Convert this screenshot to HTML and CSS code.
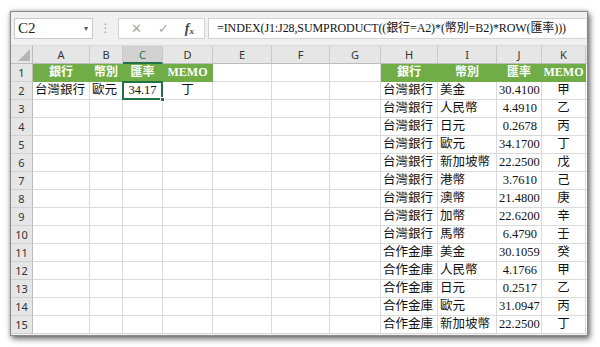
FILE: index.html
```html
<!DOCTYPE html>
<html>
<head>
<meta charset="utf-8">
<link rel="stylesheet" href="styles.css">
</head>
<body>
<div class="window">
  <div class="toolbar">
    <div class="namebox"><span>C2</span><span class="caret">▾</span></div>
    <div class="dots">⋮</div>
    <div class="fxbox"><span class="x">✕</span><span class="check">✓</span><span class="fx">f<sub>x</sub></span></div>
    <div class="formula">=INDEX(J1:J28,SUMPRODUCT((銀行=A2)*(幣別=B2)*ROW(匯率)))</div>
  </div>
  <div class="sheet">
    <div class="corner"></div>
    <div class="ch">A</div><div class="ch">B</div><div class="ch sel">C</div><div class="ch">D</div><div class="ch">E</div><div class="ch">F</div><div class="ch">G</div><div class="ch">H</div><div class="ch">I</div><div class="ch">J</div><div class="ch">K</div><div class="ch end"></div>

    <div class="rh">1</div>
    <div class="c g">銀行</div><div class="c g">幣別</div><div class="c g">匯率</div><div class="c g">MEMO</div><div class="c"></div><div class="c"></div><div class="c"></div>
    <div class="c g">銀行</div><div class="c g">幣別</div><div class="c g">匯率</div><div class="c g">MEMO</div><div class="c end"></div>

    <div class="rh">2</div>
    <div class="c">台灣銀行</div><div class="c">歐元</div><div class="c m active">34.17</div><div class="c m">丁</div><div class="c"></div><div class="c"></div><div class="c"></div>
    <div class="c">台灣銀行</div><div class="c">美金</div><div class="c r">30.4100</div><div class="c m">甲</div><div class="c end"></div>

    <div class="rh">3</div>
    <div class="c"></div><div class="c"></div><div class="c"></div><div class="c"></div><div class="c"></div><div class="c"></div><div class="c"></div>
    <div class="c">台灣銀行</div><div class="c">人民幣</div><div class="c r">4.4910</div><div class="c m">乙</div><div class="c end"></div>

    <div class="rh">4</div>
    <div class="c"></div><div class="c"></div><div class="c"></div><div class="c"></div><div class="c"></div><div class="c"></div><div class="c"></div>
    <div class="c">台灣銀行</div><div class="c">日元</div><div class="c r">0.2678</div><div class="c m">丙</div><div class="c end"></div>

    <div class="rh">5</div>
    <div class="c"></div><div class="c"></div><div class="c"></div><div class="c"></div><div class="c"></div><div class="c"></div><div class="c"></div>
    <div class="c">台灣銀行</div><div class="c">歐元</div><div class="c r">34.1700</div><div class="c m">丁</div><div class="c end"></div>

    <div class="rh">6</div>
    <div class="c"></div><div class="c"></div><div class="c"></div><div class="c"></div><div class="c"></div><div class="c"></div><div class="c"></div>
    <div class="c">台灣銀行</div><div class="c">新加坡幣</div><div class="c r">22.2500</div><div class="c m">戊</div><div class="c end"></div>

    <div class="rh">7</div>
    <div class="c"></div><div class="c"></div><div class="c"></div><div class="c"></div><div class="c"></div><div class="c"></div><div class="c"></div>
    <div class="c">台灣銀行</div><div class="c">港幣</div><div class="c r">3.7610</div><div class="c m">己</div><div class="c end"></div>

    <div class="rh">8</div>
    <div class="c"></div><div class="c"></div><div class="c"></div><div class="c"></div><div class="c"></div><div class="c"></div><div class="c"></div>
    <div class="c">台灣銀行</div><div class="c">澳幣</div><div class="c r">21.4800</div><div class="c m">庚</div><div class="c end"></div>

    <div class="rh">9</div>
    <div class="c"></div><div class="c"></div><div class="c"></div><div class="c"></div><div class="c"></div><div class="c"></div><div class="c"></div>
    <div class="c">台灣銀行</div><div class="c">加幣</div><div class="c r">22.6200</div><div class="c m">辛</div><div class="c end"></div>

    <div class="rh">10</div>
    <div class="c"></div><div class="c"></div><div class="c"></div><div class="c"></div><div class="c"></div><div class="c"></div><div class="c"></div>
    <div class="c">台灣銀行</div><div class="c">馬幣</div><div class="c r">6.4790</div><div class="c m">壬</div><div class="c end"></div>

    <div class="rh">11</div>
    <div class="c"></div><div class="c"></div><div class="c"></div><div class="c"></div><div class="c"></div><div class="c"></div><div class="c"></div>
    <div class="c">合作金庫</div><div class="c">美金</div><div class="c r">30.1059</div><div class="c m">癸</div><div class="c end"></div>

    <div class="rh">12</div>
    <div class="c"></div><div class="c"></div><div class="c"></div><div class="c"></div><div class="c"></div><div class="c"></div><div class="c"></div>
    <div class="c">合作金庫</div><div class="c">人民幣</div><div class="c r">4.1766</div><div class="c m">甲</div><div class="c end"></div>

    <div class="rh">13</div>
    <div class="c"></div><div class="c"></div><div class="c"></div><div class="c"></div><div class="c"></div><div class="c"></div><div class="c"></div>
    <div class="c">合作金庫</div><div class="c">日元</div><div class="c r">0.2517</div><div class="c m">乙</div><div class="c end"></div>

    <div class="rh">14</div>
    <div class="c"></div><div class="c"></div><div class="c"></div><div class="c"></div><div class="c"></div><div class="c"></div><div class="c"></div>
    <div class="c">合作金庫</div><div class="c">歐元</div><div class="c r">31.0947</div><div class="c m">丙</div><div class="c end"></div>

    <div class="rh">15</div>
    <div class="c"></div><div class="c"></div><div class="c"></div><div class="c"></div><div class="c"></div><div class="c"></div><div class="c"></div>
    <div class="c">合作金庫</div><div class="c">新加坡幣</div><div class="c r">22.2500</div><div class="c m">丁</div><div class="c end"></div>
  </div>
</div>
</body>
</html>
```

FILE: styles.css
```css
html, body {
  margin: 0;
  padding: 0;
  background: #ffffff;
}
body {
  width: 600px;
  height: 347px;
  overflow: hidden;
  padding: 11px 0 0 10px;
  box-sizing: border-box;
}
.window {
  width: 578px;
  height: 325px;
  border: 1px solid #8a8a8a;
  box-sizing: border-box;
  background: #f0f0f0;
  box-shadow: 2px 3px 6px rgba(0,0,0,0.55), 0 0 4px rgba(0,0,0,0.25);
  overflow: hidden;
}
.toolbar {
  height: 34px;
  display: flex;
  align-items: flex-start;
  padding-top: 6px;
  box-sizing: border-box;
  border-bottom: 1px solid #dadada;
}
.namebox {
  margin-left: 3px;
  width: 79px;
  height: 21px;
  background: #fff;
  border: 1px solid #c8c8c8;
  box-sizing: border-box;
  display: flex;
  align-items: center;
  justify-content: space-between;
  padding: 0 4px 0 3px;
  font-family: "Liberation Serif", serif;
  font-size: 15px;
  color: #222;
}
.caret {
  font-family: "DejaVu Sans", sans-serif;
  font-size: 8px;
  color: #555;
}
.dots {
  width: 25px;
  text-align: center;
  font-family: "DejaVu Sans", sans-serif;
  font-size: 12px;
  color: #a0a0a0;
  line-height: 21px;
}
.fxbox {
  width: 87px;
  height: 21px;
  background: #fff;
  border: 1px solid #d2d2d2;
  box-sizing: border-box;
  display: flex;
  align-items: center;
  justify-content: space-around;
  padding: 0 2px 0 4px;
  font-family: "DejaVu Sans", sans-serif;
  font-size: 13px;
  color: #a6a6a6;
}
.fx {
  font-family: "Liberation Serif", serif;
  font-style: italic;
  font-weight: bold;
  color: #444;
  font-size: 14px;
}
.fx sub {
  font-size: 9px;
  vertical-align: -1px;
}
.formula {
  flex: 1;
  margin-left: 3px;
  margin-right: 1px;
  height: 21px;
  background: #fff;
  border: 1px solid #d2d2d2;
  border-right: none;
  box-sizing: border-box;
  font-family: "Liberation Serif", "Noto Sans CJK TC", serif;
  font-size: 12px;
  letter-spacing: -0.1px;
  line-height: 19px;
  padding-left: 8px;
  color: #111;
  white-space: nowrap;
  overflow: hidden;
}
.sheet {
  display: grid;
  grid-template-columns: 22px 57px 33px 40px 50px 59px 58px 51px 57px 59px 45px 44px 1fr;
  grid-auto-rows: 18px;
  background: #fff;
}
.corner {
  background: #e6e6e6;
  border-right: 1px solid #bcbcbc;
  border-bottom: 1px solid #bcbcbc;
  box-sizing: border-box;
  position: relative;
}
.corner::after {
  content: "";
  position: absolute;
  right: 2px;
  bottom: 2px;
  width: 0;
  height: 0;
  border-left: 12px solid transparent;
  border-bottom: 12px solid #b5b5b5;
}
.ch {
  background: #e6e6e6;
  border-right: 1px solid #c8c8c8;
  border-bottom: 1px solid #bcbcbc;
  box-sizing: border-box;
  text-align: center;
  font-family: "Noto Sans", sans-serif;
  font-size: 11px;
  line-height: 17px;
  color: #333;
}
.ch.sel {
  background: #d2d2d2;
  border-bottom: 2px solid #217346;
  color: #217346;
}
.ch.end {
  border-right: none;
}
.rh {
  grid-column: 1;
  background: #e6e6e6;
  border-right: 1px solid #bcbcbc;
  border-bottom: 1px solid #d0d0d0;
  box-sizing: border-box;
  text-align: center;
  font-family: "Noto Sans", sans-serif;
  font-size: 11px;
  line-height: 18px;
  color: #333;
}
.c {
  border-right: 1px solid #dadada;
  border-bottom: 1px solid #dadada;
  box-sizing: border-box;
  font-family: "Liberation Serif", "Noto Sans CJK TC", serif;
  font-size: 12.5px;
  line-height: 17px;
  padding: 0 2px;
  color: #111;
  white-space: nowrap;
}
.c.end {
  border-right: none;
}
.c.g {
  background: #70ad47;
  color: #fff;
  font-weight: bold;
  font-size: 12px;
  padding: 0;
  text-align: center;
  border-right-color: #70ad47;
  border-bottom-color: #70ad47;
}
.c.m { text-align: center; }
.c.r { text-align: right; padding-right: 4px; }
.c.active {
  position: relative;
}
.c.active::before {
  content: "";
  position: absolute;
  left: -1px;
  top: -1px;
  right: -1px;
  bottom: -1px;
  border: 2px solid #217346;
}
.c.active::after {
  content: "";
  position: absolute;
  right: -3px;
  bottom: -3px;
  width: 5px;
  height: 5px;
  background: #217346;
  border: 1px solid #fff;
  box-sizing: border-box;
}
```
